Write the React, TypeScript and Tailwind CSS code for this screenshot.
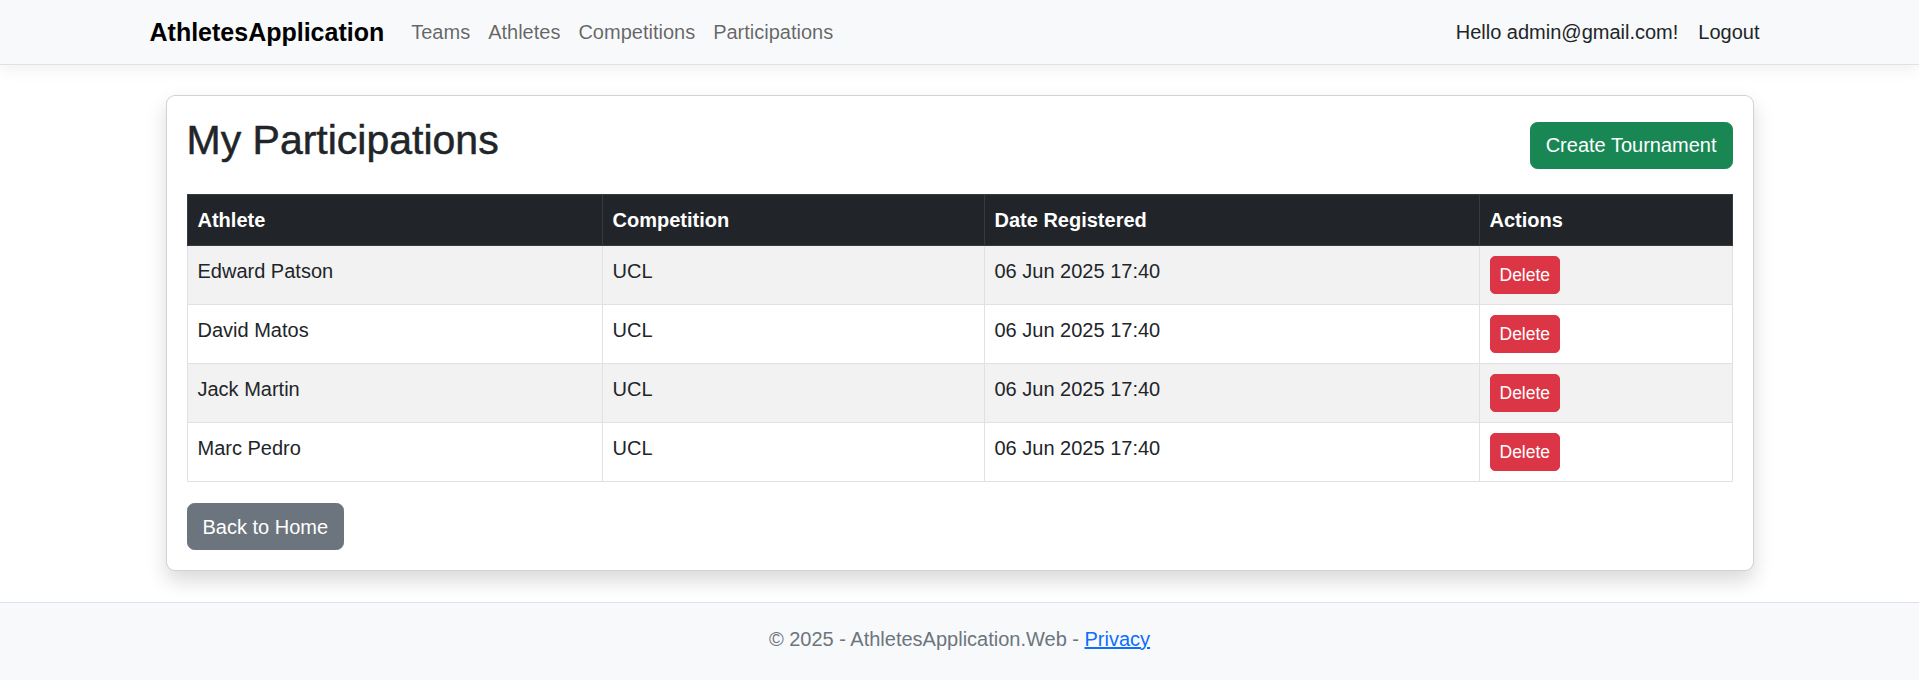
import React from 'react'

interface Participation {
  athlete: string,
  competition: string,
  registered: string,
}

const rows: Participation[] = [
  { athlete: 'Edward Patson', competition: 'UCL', registered: '06 Jun 2025 17:40' },
  { athlete: 'David Matos', competition: 'UCL', registered: '06 Jun 2025 17:40' },
  { athlete: 'Jack Martin', competition: 'UCL', registered: '06 Jun 2025 17:40' },
  { athlete: 'Marc Pedro', competition: 'UCL', registered: '06 Jun 2025 17:40' },
]

const Navbar = () => {
  return (
    <nav className="h-[65px] bg-[#f8f9fa] border-b border-[#dee2e6] shadow-[0_5px_15px_rgba(0,0,0,0.06)]">
      <div className="mx-auto w-[1650px] px-[15px] h-full flex items-center justify-between">
        <div className="flex items-center">
          <a className="text-[25px] font-bold text-black mr-[18px] leading-[38px]">AthletesApplication</a>
          <ul className="flex text-[20px] leading-[30px] text-black/60">
            <li className="px-[9px]">Teams</li>
            <li className="px-[9px]">Athletes</li>
            <li className="px-[9px]">Competitions</li>
            <li className="px-[9px]">Participations</li>
          </ul>
        </div>
        <ul className="flex text-[20px] leading-[30px] text-[#212529]">
          <li className="px-[10px]">Hello admin@gmail.com!</li>
          <li className="px-[10px]">Logout</li>
        </ul>
      </div>
    </nav>
  )
}

const App = () => {
  return (
    <div className="min-h-[680px] bg-white text-[#212529] flex flex-col" style={{ fontFamily: '"Liberation Sans", Arial, sans-serif' }}>
      <Navbar />

      <main className="mx-auto w-[1588px] mt-[30px]">
        <div className="bg-white border border-black/[0.175] rounded-[9px] shadow-[0_10px_20px_rgba(0,0,0,0.15)] p-[20px]">
          <div className="flex justify-between items-center">
            <h2 className="text-[41px] leading-[48px] font-medium mb-[10px] [-webkit-text-stroke:0.5px_#212529]">My Participations</h2>
            <button className="bg-[#198754] text-white text-[20px] leading-[30px] px-[15px] py-[7.5px] border border-[#198754] rounded-[7.5px]">Create Tournament</button>
          </div>

          <table className="mt-[20px] w-full table-fixed border-collapse text-[20px] leading-[30px]">
            <thead>
              <tr className="bg-[#212529] text-white font-bold text-left">
                <th className="w-[415px] p-[10px] border border-[#373b3e] align-top">Athlete</th>
                <th className="w-[382px] p-[10px] border border-[#373b3e] align-top">Competition</th>
                <th className="w-[495px] p-[10px] border border-[#373b3e] align-top">Date Registered</th>
                <th className="p-[10px] border border-[#373b3e] align-top">Actions</th>
              </tr>
            </thead>
            <tbody>
              {rows.map((r, i) => (
                <tr key={r.athlete} className={i % 2 === 0 ? 'bg-[#f2f2f2]' : 'bg-white'}>
                  <td className="p-[10px] border border-[#dee2e6] align-top">{r.athlete}</td>
                  <td className="p-[10px] border border-[#dee2e6] align-top">{r.competition}</td>
                  <td className="p-[10px] border border-[#dee2e6] align-top">{r.registered}</td>
                  <td className="p-[10px] border border-[#dee2e6] align-top">
                    <button className="bg-[#dc3545] text-white text-[17.5px] leading-[26px] px-[9px] py-[5px] border border-[#dc3545] rounded-[5px]">Delete</button>
                  </td>
                </tr>
              ))}
            </tbody>
          </table>

          <button className="mt-[21px] bg-[#6c757d] text-white text-[20px] leading-[30px] px-[15px] py-[7.5px] border border-[#6c757d] rounded-[7.5px]">Back to Home</button>
        </div>
      </main>

      <footer className="mt-[31px] flex-1 border-t border-[#dee2e6] bg-[#f8f9fa] pt-[21px] pb-[30px] text-center text-[20px] leading-[30px] text-[#6c757d]">
        © 2025 - AthletesApplication.Web - <a className="text-[#0d6efd] underline">Privacy</a>
      </footer>
    </div>
  )
}

export default App
